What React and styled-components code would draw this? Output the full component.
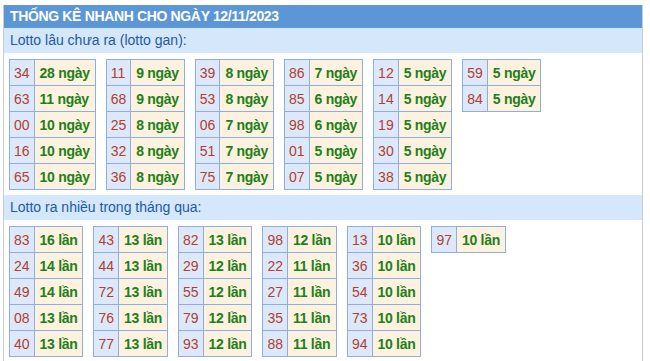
import React from 'react'
import styled, { createGlobalStyle } from 'styled-components';

const Global = createGlobalStyle`
    body {
        margin: 0;
        background: #fff;
        font-family: "Liberation Sans", Arial, sans-serif;
    }
`
const Box = styled.div`
    margin: 5px 0 0 3px;
    width: 640px;
    border-left: 1px solid #c9ccd4;
    border-right: 1px solid #c9ccd4;
    box-sizing: border-box;
`
const Header = styled.div`
    height: 23px;
    line-height: 23px;
    background: #5b96d6;
    color: #fff;
    font-weight: bold;
    font-size: 14px;
    letter-spacing: -0.35px;
    padding-left: 6px;
`
const Band = styled.div`
    height: 25px;
    line-height: 25px;
    background: #d4e7fb;
    color: #1d5aa6;
    font-size: 14px;
    padding-left: 6px;
`
const Tables = styled.div`
    display: flex;
    flex-wrap: wrap;
    align-items: flex-start;
    gap: 10px;
    padding: 6px 0 5px 5px;
`
const Table = styled.table`
    border-collapse: collapse;
    font-size: 14px;
`
const Cell = styled.td`
    height: 25px;
    padding: 0 ${p => (p.$num ? 4 : 5)}px;
    border: 1px solid #8eaedd;
    background: ${p => (p.$num ? '#dde9fa' : '#fdf1df')};
    color: ${p => (p.$num ? '#b0402f' : '#1e8019')};
    font-weight: ${p => (p.$num ? 'normal' : 'bold')};
    letter-spacing: ${p => (p.$num ? 0 : -0.3)}px;
    white-space: nowrap;
`

const gan = [
    [['34', 28], ['63', 11], ['00', 10], ['16', 10], ['65', 10]],
    [['11', 9], ['68', 9], ['25', 8], ['32', 8], ['36', 8]],
    [['39', 8], ['53', 8], ['06', 7], ['51', 7], ['75', 7]],
    [['86', 7], ['85', 6], ['98', 6], ['01', 5], ['07', 5]],
    [['12', 5], ['14', 5], ['19', 5], ['30', 5], ['38', 5]],
    [['59', 5], ['84', 5]],
]
const nhieu = [
    [['83', 16], ['24', 14], ['49', 14], ['08', 13], ['40', 13]],
    [['43', 13], ['44', 13], ['72', 13], ['76', 13], ['77', 13]],
    [['82', 13], ['29', 12], ['55', 12], ['79', 12], ['93', 12]],
    [['98', 12], ['22', 11], ['27', 11], ['35', 11], ['88', 11]],
    [['13', 10], ['36', 10], ['54', 10], ['73', 10], ['94', 10]],
    [['97', 10]],
]

function Group({ data, unit }) {
    return (
        <Tables>
            {data.map((rows, i) => (
                <Table key={i}>
                    <tbody>
                        {rows.map(([n, c]) => (
                            <tr key={n}>
                                <Cell $num>{n}</Cell>
                                <Cell>{c} {unit}</Cell>
                            </tr>
                        ))}
                    </tbody>
                </Table>
            ))}
        </Tables>
    )
}

function App() {
    return (
        <>
            <Global />
            <Box>
                <Header>THỐNG KÊ NHANH CHO NGÀY 12/11/2023</Header>
                <Band>Lotto lâu chưa ra (lotto gan):</Band>
                <Group data={gan} unit="ngày" />
                <Band>Lotto ra nhiều trong tháng qua:</Band>
                <Group data={nhieu} unit="lần" />
            </Box>
        </>
    )
}

export default App
